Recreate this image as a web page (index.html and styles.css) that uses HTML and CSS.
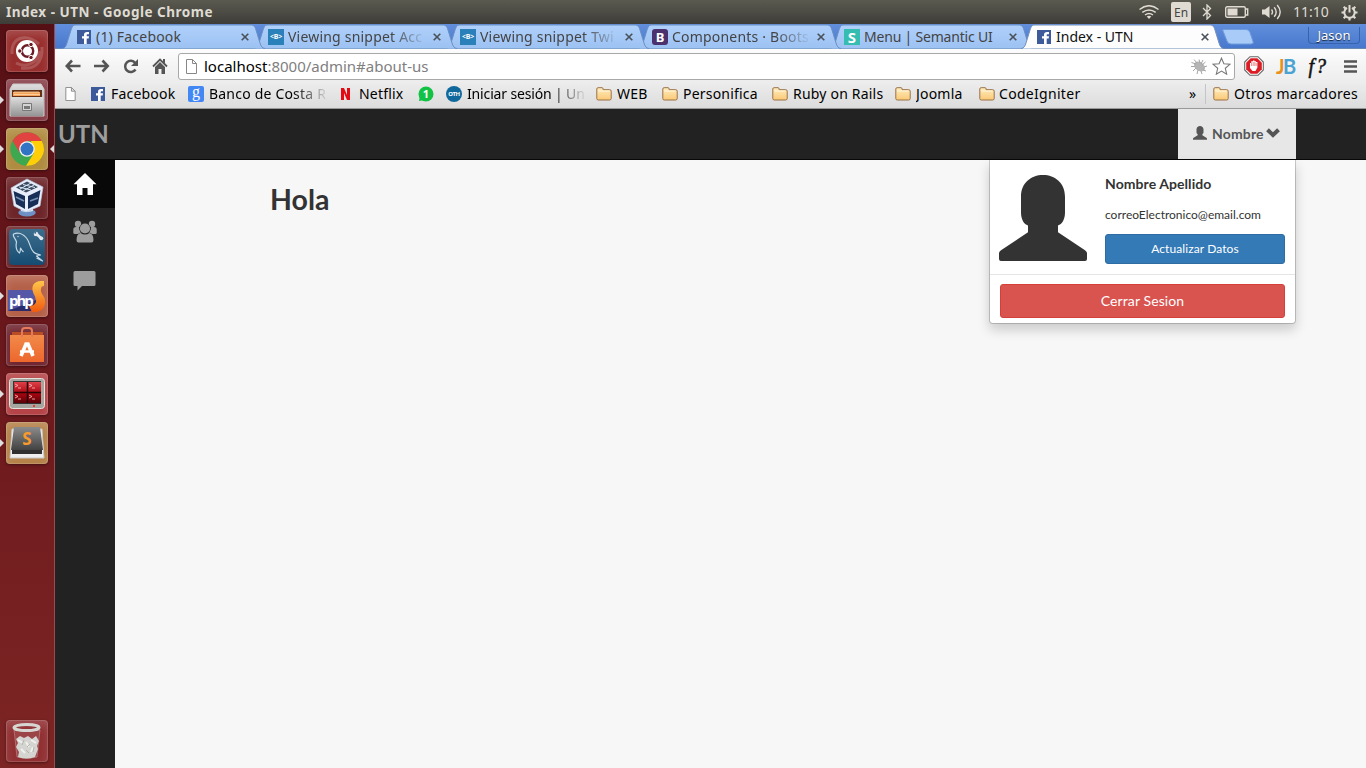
FILE: index.html
```html
<!DOCTYPE html>
<html lang="es">
<head>
<meta charset="utf-8">
<title>Index - UTN</title>
<link rel="stylesheet" href="styles.css">
</head>
<body>
<svg class="defs" width="0" height="0">
  <defs>
    <linearGradient id="tabfill" x1="0" y1="0" x2="0" y2="1"><stop offset="0" stop-color="#b0d0fa"/><stop offset="1" stop-color="#9cc2f3"/></linearGradient>
    <linearGradient id="folderfill" x1="0" y1="0" x2="0" y2="1"><stop offset="0" stop-color="#ffedc0"/><stop offset="1" stop-color="#fbc975"/></linearGradient>
    <linearGradient id="metal" x1="0" y1="0" x2="0" y2="1"><stop offset="0" stop-color="#dedede"/><stop offset="1" stop-color="#949494"/></linearGradient>
    <linearGradient id="orange" x1="0" y1="0" x2="0" y2="1"><stop offset="0" stop-color="#ffc54a"/><stop offset="1" stop-color="#f15a0e"/></linearGradient>
    <linearGradient id="sea" x1="0" y1="0" x2="0" y2="1"><stop offset="0" stop-color="#3d6d8d"/><stop offset="1" stop-color="#164c72"/></linearGradient>
    <linearGradient id="bag" x1="0" y1="0" x2="0" y2="1"><stop offset="0" stop-color="#f18a4a"/><stop offset="1" stop-color="#ed672c"/></linearGradient>
    <linearGradient id="dark" x1="0" y1="0" x2="0" y2="1"><stop offset="0" stop-color="#8b8b8b"/><stop offset="1" stop-color="#424242"/></linearGradient>
    <linearGradient id="redscreen" x1="0" y1="0" x2="0" y2="1"><stop offset="0" stop-color="#e04048"/><stop offset=".55" stop-color="#a80610"/><stop offset="1" stop-color="#5a0208"/></linearGradient>
  </defs>
  <symbol id="tab" viewBox="0 0 203 25"><path d="M0 24.500C3 24.500 4 22 5 19L9 6C10.500 2 11 1 14 1H188C192 1 193 2.500 194 6L198 19C199 22 200 24.500 203 24.500"/></symbol>
  <symbol id="fb" viewBox="0 0 14 14"><path fill="#3d5a9a" d="M0 0h14v14H0z"/><path fill="#fff" d="M7 14V8.500H5V6.200h2V4.800C7 2.800 8.200 2 10 2h2v2.200h-1.300c-.8 0-1 .3-1 .9v1.100H12l-.3 2.300h-2V14z"/></symbol>
  <symbol id="page" viewBox="0 0 11 15"><path fill="#fff" stroke="#888" d="M.5.5h6l4 4v10H.5zM6.500.5v4h4"/></symbol>
  <symbol id="folder" viewBox="0 0 16 14"><path fill="url(#folderfill)" stroke="#9a7048" d="M.8 11.500V2q0-1.300 1.300-1.300h4q1 0 1 1.300v.7h6.600q1.500 0 1.500 1.500v7.300q0 1.500-1.500 1.500H2.300Q.8 13 .8 11.500z"/><path fill="none" stroke="#fff6dc" d="M2 4h11.500"/></symbol>
  <symbol id="user" viewBox="0 0 88 88"><path d="M22 22C22 8 32 0 44 0s22 8 22 22v16c0 7-3 12-7 13v7l27 18q2 1.500 2 3v6q0 2-2 2H2q-2 0-2-2v-6q0-1.500 2-3l27-18v-7c-4-1-7-6-7-13z"/></symbol>
  <symbol id="x" viewBox="0 0 8 8"><path fill="none" stroke="#4a5058" stroke-width="1.600" d="M.7.7l6.600 6.600M7.300.7L.7 7.300"/></symbol>
</svg>

<header class="panel">
  <strong class="panel-title">Index - UTN - Google Chrome</strong>
  <div class="tray">
    <svg class="wifi" width="20" height="14" viewBox="0 0 20 14"><g fill="none" stroke="#dfdbd2" stroke-width="1.500"><path d="M.5 4.500Q10-3 19.500 4.500"/><path d="M3.300 7.400q6.700-5 13.400 0M6 10q4-3 8 0"/></g><path fill="#dfdbd2" d="M7.700 11.600q2.300-1.500 4.600 0L10 14z"/></svg>
    <span class="lang">En</span>
    <svg class="bt" width="10" height="16" viewBox="0 0 10 16"><path fill="none" stroke="#dfdbd2" stroke-width="1.300" d="M1 4l7.500 7.500L5 15V1l3.500 3.500L1 12"/></svg>
    <svg class="battery" width="24" height="12" viewBox="0 0 24 12"><rect x=".7" y=".7" width="19.600" height="10.600" rx="1.500" fill="none" stroke="#dfdbd2" stroke-width="1.400"/><path fill="#dfdbd2" d="M2.500 2.500h10v7h-10z"/><path fill="none" stroke="#dfdbd2" stroke-width="1.400" d="M21 3h1.700v6H21"/></svg>
    <svg class="volume" width="21" height="16" viewBox="0 0 21 16"><path fill="#dfdbd2" d="M1 5.500h3L8.500 2v12L4 10.500H1z"/><g fill="none" stroke="#dfdbd2" stroke-width="1.400"><path d="M10.500 5.500q2 2.500 0 5M13.200 3.200q4 4.800 0 9.600M16.200 1q6 7 0 14"/></g></svg>
    <span class="clock">11:10</span>
    <svg width="17" height="17" viewBox="0 0 17 17"><g stroke="#dfdbd2" fill="none"><path stroke-width="2" d="M11 3.900a5.200 5.200 0 1 1-5 0M8.500 1v7.500"/><path stroke-width="2.200" d="M.5 8.500h3M13.500 8.500h3M8.500 13.500v3M2.700 2.700l2 2M14.300 2.700l-2 2M2.700 14.300l2-2M14.300 14.300l-2-2"/></g></svg>
  </div>
</header>

<div class="desktop">
<nav class="launcher">
  <div class="tile ubuntu"><svg viewBox="0 0 42 42"><g fill="none" stroke="#fff" stroke-opacity=".18" stroke-width="3"><path d="M6 24C5 7 20 3 33 14M36 17c1 15-7 23-21 21M10 33C22 39 33 31 34 21"/></g><circle cx="21" cy="21" r="11" fill="#fff"/><circle cx="21.500" cy="21" r="5.700" fill="none" stroke="#6d1b24" stroke-width="2.400"/><g fill="#6d1b24" stroke="#fff"><circle cx="13.800" cy="21" r="2.200"/><circle cx="25" cy="14.500" r="2.200"/><circle cx="25" cy="27.500" r="2.200"/></g></svg></div>
  <div class="tile files run"><svg viewBox="0 0 42 42"><path fill="url(#metal)" stroke="#ccc" d="M7 5h28l3 5v27H4V10z"/><path fill="#653116" d="M6 11h30v7H6z"/><path fill="#f3a25a" d="M7 13h27v4H7z"/><path stroke="#ffe1b7" stroke-width=".7" d="M8 13h25M8 15.500h26"/><path fill="url(#metal)" d="M5 18h32v19H5z"/><path fill="#d4d4d4" stroke="#777" d="M16.500 24.500h9v7h-9z"/><path fill="#777" d="M18 27h6v3h-6z"/></svg></div>
  <div class="tile chrome run active"><svg viewBox="0 0 42 42"><circle cx="21" cy="21" r="16.700" fill="#3da850"/><path fill="#e04340" d="M6.500 13A16.700 16.700 0 0 1 35.800 13H21L14 25z"/><path fill="#ffce08" d="M35.800 13A16.700 16.700 0 0 1 20 37.700L28 25l-3-12z"/><circle cx="21" cy="21" r="7.800" fill="#f4f4f4"/><circle cx="21" cy="21" r="6.500" fill="#3274c4"/></svg></div>
  <div class="tile vbox"><svg viewBox="0 0 42 42"><path fill="#6d91c4" d="M15 31h12v2q5 2 1 5-7 3-14 0-4-3 1-5z"/><path fill="#d6e2f2" d="M15 32h12v2q-6 2-12 0z"/><path fill="#e7eef9" stroke="#b8cbe4" stroke-width=".7" d="M5 11L21 2l16 8-3 19-14 6-12-6z"/><path fill="#172f56" d="M7.500 14L19 19v13L10 27zM22 19l12.500-6L32 27l-10 5z"/><path fill="#3c4a60" d="M10 10.500L21 4.500l11 5.500-12 5.500z"/><g stroke="#dbe8fa" stroke-width="1"><path d="M13 10l12 3M17 7.500l12 3M14 12l11-6M17 14l11-6"/></g><g stroke="#7791b5" stroke-width="1.700"><path d="M10 20l8 4M24 24l8-3"/></g></svg></div>
  <div class="tile mysql"><svg viewBox="0 0 42 42"><rect x="3" y="3" width="36" height="36" rx="4" fill="url(#sea)"/><path fill="none" stroke="#c6d9e4" stroke-width="1.200" stroke-linejoin="round" d="M7.500 8c5-2 10 0 13 4 4 5 3 10 7 14 2 2 4 2 7 3l-4 1 6 5-6-3M7.500 8c-1 3 2 4 3 8-1 5 0 9 3 11 1-2 1-3 1-5 1 2 2 3 3 4"/><circle cx="12" cy="10.500" r=".7" fill="#c6d9e4"/><path stroke="#e0e8ee" stroke-width="2.600" d="M31 8.500l4.500 4"/><circle cx="30" cy="8" r="2.300" fill="#e0e8ee"/><circle cx="35.300" cy="12.300" r="1.900" fill="#e0e8ee"/><circle cx="29.200" cy="6.800" r="1" fill="#37678a"/></svg></div>
  <div class="tile phpstorm run"><svg viewBox="0 0 42 42"><path fill="#5557a7" d="M2 15h27v21H2z"/><path fill="#292b6b" d="M2 36l28-11v11z"/><path fill="url(#orange)" d="M38 6h-3c-7 0-10 5-8 11 1 4 4 6 3 10-1 3-4 4-7 4l3 6h3c7 0 11-5 10-12-1-5-5-7-4-11 0-2 1-3 3-3z"/><text x="3" y="31" class="php">php</text></svg></div>
  <div class="tile software"><svg viewBox="0 0 42 42"><path fill="#b94e25" d="M6 8h31v5H6z"/><path fill="url(#bag)" d="M4 11h34v27H4z"/><path fill="none" stroke="#e77a58" stroke-width="2" d="M16 13V7q0-3 3-3h4q3 0 3 3v6"/><path fill="none" stroke="#fff" stroke-width="3.600" d="M15 32l5-12h2l5 12"/><path stroke="#fff" stroke-width="2.500" d="M14 27.500h14"/></svg></div>
  <div class="tile terminator run"><svg viewBox="0 0 42 42"><rect x="3.500" y="5.500" width="35" height="30" rx="3" fill="#a6a6a0" stroke="#e3e3de"/><path fill="#333" d="M7 8h28v23H7z"/><path fill="url(#redscreen)" d="M8 9h27v21H8z"/><path stroke="#280205" stroke-width="1.500" d="M21.500 9v21M8 19.500h27"/><path fill="none" stroke="#ffc2c2" stroke-width=".8" d="M9 11l3 1.500L9 14M12 15h3M23 11l3 1.500-3 1.500M26 15h3M9 22l3 1.500L9 25M12 26h3M23 22l3 1.500-3 1.500M26 26h3"/><circle cx="28" cy="33" r="1" fill="#e21"/></svg></div>
  <div class="tile sublime run"><svg viewBox="0 0 42 42"><path fill="#eee" stroke="#c9c9c9" d="M6 7h30l2 29H4z"/><path fill="#303030" d="M6 27h30v5H6z"/><path fill="url(#dark)" d="M8 5h26l3 23H5z"/><text x="21" y="23" text-anchor="middle" class="sub">S</text></svg></div>
  <div class="tile trash"><svg viewBox="0 0 42 42"><path fill="#fff" fill-opacity=".1" stroke="#d6bcbc" stroke-opacity=".4" d="M8 10l3 27q10 3 20 0l3-27z"/><path fill="#d4d5d1" d="M10 19l4-3 4 2 4-2 4 3 4-3 3 5-2 5 1 3-3 8q-9 3-17 0l1-5-3-5 2-4z"/><g stroke="#f0f0ec" stroke-width="2"><path d="M12 20l5 3M25 20l5 3M15 29l4 4M27 27l-2 5M20 22l3 5"/></g><g stroke="#b3b4af"><path d="M18 20l-2 5M24 24l-3 3M20 30l3 3M28 27l-1 5"/></g><ellipse cx="20.500" cy="7.500" rx="12.500" ry="3" fill="none" stroke="#d7d7d2" stroke-width="3"/></svg></div>
</nav>

<main class="browser">
  <div class="tabs">
    <div class="tab t1"><svg class="shape"><use href="#tab"/></svg><span class="fav"><svg width="14" height="14"><use href="#fb"/></svg></span><span class="label wide">(1) Facebook</span><svg class="close"><use href="#x"/></svg></div>
    <div class="tab t2"><svg class="shape"><use href="#tab"/></svg><span class="fav snippet">&lt;B&gt;</span><span class="label fade wide">Viewing snippet Acc</span><svg class="close"><use href="#x"/></svg></div>
    <div class="tab t3"><svg class="shape"><use href="#tab"/></svg><span class="fav snippet">&lt;B&gt;</span><span class="label fade wide">Viewing snippet Twi</span><svg class="close"><use href="#x"/></svg></div>
    <div class="tab t4"><svg class="shape"><use href="#tab"/></svg><span class="fav boots">B</span><span class="label fade wide">Components · Boots</span><svg class="close"><use href="#x"/></svg></div>
    <div class="tab t5"><svg class="shape"><use href="#tab"/></svg><span class="fav semantic">S</span><span class="label menu-label">Menu | Semantic UI</span><svg class="close"><use href="#x"/></svg></div>
    <div class="tab t6 selected"><svg class="shape"><use href="#tab"/></svg><span class="fav"><svg width="14" height="14"><use href="#fb"/></svg></span><span class="label">Index - UTN</span><svg class="close"><use href="#x"/></svg></div>
    <svg class="newtab" width="32" height="16" viewBox="0 0 32 16"><path fill="#a9cbf8" stroke="#6f9bdc" d="M1 2Q0 .5 2 .5h22q3 0 4 3l3 9q1 2.500-2 2.500H9q-3 0-4-3z"/></svg>
    <span class="profile">Jason</span>
  </div>

  <div class="toolbar">
    <svg width="16" height="14" viewBox="0 0 16 14"><path fill="none" stroke="#555" stroke-width="2.600" d="M7 1.500L1.800 7 7 12.500M2 7h13.500"/></svg>
    <svg width="16" height="14" viewBox="0 0 16 14"><path fill="none" stroke="#555" stroke-width="2.600" d="M8.500 1.500L13.700 7l-5.200 5.500M13.500 7H0"/></svg>
    <svg width="16" height="15" viewBox="0 0 16 15"><path fill="none" stroke="#555" stroke-width="2.500" d="M12.500 10.500a5.600 5.600 0 1 1-.3-6.500"/><path fill="#555" d="M15 0v7H8z"/></svg>
    <svg width="16" height="16" viewBox="0 0 16 16"><path fill="none" stroke="#555" stroke-width="1.800" d="M1 8.500l7-7 7 7"/><path fill="#555" d="M11 1h2v5l-2-2zM8 4l5 5v7H9.500v-5h-3v5H3V9z"/></svg>
    <div class="omnibox">
      <svg width="11" height="15"><use href="#page"/></svg>
      <span class="url"><b>localhost</b>:8000/admin#about-us</span>
      <svg class="bug" width="16" height="15" viewBox="0 0 16 15"><ellipse cx="8.500" cy="7.500" rx="6" ry="4.300" transform="rotate(35 8.500 7.500)" fill="#b5b5b5"/><path fill="none" stroke="#a5a5a5" d="M.5 3.500L5 5M3 .5L6 4M8 .5L9 4M0 7.500h4M2 12l3-3M6 15l1-4M11 15l-1-3M15 12l-3-1M16 7l-3 1M14.500 3L11 6M12 1l-2 4"/></svg>
      <svg width="19" height="18" viewBox="0 0 19 18"><path fill="#fff" stroke="#777" stroke-width="1.100" d="M9.500 1.200l2.400 5.600 6 .5-4.600 4 1.400 5.900-5.200-3.100-5.200 3.100 1.400-5.900-4.600-4 6-.5z"/></svg>
    </div>
    <svg class="abp" width="20" height="20" viewBox="0 0 20 20"><path fill="#fff" stroke="#666" stroke-width="1.100" d="M6 .7h8L19.300 6v8L14 19.300H6L.7 14V6z"/><path fill="#db1e25" d="M6.700 2.200h6.600l4.500 4.500v6.600l-4.500 4.500H6.700l-4.500-4.500V6.700z"/><path fill="#fff" d="M6 7h1.300V5.300H9V4.500h1.500v.8H12V6h1.400v5.500L11.500 15h-3L6 12z"/><path stroke="#db1e25" stroke-width=".5" d="M7.600 7v3M9.200 6v4M10.800 6v4M12.200 7v3"/></svg>
    <span class="jb"><i>J</i>B</span>
    <span class="fq"><i>f</i>?</span>
    <svg width="13" height="13" viewBox="0 0 13 13"><path stroke="#555" stroke-width="2.700" d="M0 1.500h13M0 6.500h13M0 11.500h13"/></svg>
  </div>

  <div class="bookmarks">
    <svg class="mi" width="11" height="14"><use href="#page"/></svg>
    <a class="bm b1"><svg width="14" height="14"><use href="#fb"/></svg><span>Facebook</span></a>
    <a class="bm b2"><em class="google">g</em><span class="fade">Banco de Costa R</span></a>
    <a class="bm b3"><svg width="11" height="14" viewBox="0 0 11 14"><path fill="#e50914" d="M1 1h3l3 7V1h3v12H7L4 6v7H1z"/></svg><span>Netflix</span></a>
    <a class="bm b4"><svg width="16" height="16" viewBox="0 0 16 16"><circle cx="8" cy="8" r="7.500" fill="#12c244"/><path fill="#12c244" d="M1 15l1-6 5 5z"/><text x="8" y="12" text-anchor="middle" class="one">1</text></svg></a>
    <a class="bm b5"><em class="oth">OTH</em><span class="fade">Iniciar sesión | Un</span></a>
    <a class="bm b6"><svg width="16" height="14"><use href="#folder"/></svg><span>WEB</span></a>
    <a class="bm b7"><svg width="16" height="14"><use href="#folder"/></svg><span>Personifica</span></a>
    <a class="bm b8"><svg width="16" height="14"><use href="#folder"/></svg><span>Ruby on Rails</span></a>
    <a class="bm b9"><svg width="16" height="14"><use href="#folder"/></svg><span>Joomla</span></a>
    <a class="bm b10"><svg width="16" height="14"><use href="#folder"/></svg><span>CodeIgniter</span></a>
    <span class="more">»</span>
    <a class="bm b11"><svg width="16" height="14"><use href="#folder"/></svg><span>Otros marcadores</span></a>
  </div>

  <div class="site">
    <div class="navbar">
      <a class="brand">UTN</a>
      <div class="account">
        <a class="toggle"><svg width="14" height="14"><use href="#user"/></svg><strong>Nombre</strong><svg width="14" height="10" viewBox="0 0 14 10"><path fill="none" stroke="#555" stroke-width="4" d="M1.500 1.800L7 7l5.500-5.200"/></svg></a>
        <div class="menu">
          <div class="who">
            <svg width="88" height="87" viewBox="0 0 88 88" preserveAspectRatio="none"><use href="#user" width="88" height="88"/></svg>
            <div class="info">
              <strong>Nombre Apellido</strong>
              <small>correoElectronico@email.com</small>
              <a class="btn primary">Actualizar Datos</a>
            </div>
          </div>
          <div class="out"><a class="btn danger">Cerrar Sesion</a></div>
        </div>
      </div>
    </div>
    <div class="body">
      <nav class="side">
        <a class="on"><svg width="24" height="24" viewBox="0 0 24 24"><path d="M12 1l11.500 11.300H20V23h-5.500v-7h-5v7H4V12.300H.5z"/></svg></a>
        <a><svg width="24" height="24" viewBox="0 0 24 24"><circle cx="5" cy="4" r="3.200"/><circle cx="19" cy="4" r="3.200"/><path d="M.3 13V9.500Q.3 7 3 7h3q.5 5 3 6l-4 1H2q-1.700 0-1.700-1zM23.700 13V9.500Q23.700 7 21 7h-3q-.5 5-3 6l4 1h3q1.700 0 1.700-1z"/><g class="front"><circle cx="12" cy="8.500" r="5.100"/><path d="M3.500 20q0-6 4-7 4.500 3 9 0 4 1 4 7 0 2.500-2 2.500h-13q-2 0-2-2.500z"/></g></svg></a>
        <a><svg width="24" height="24" viewBox="0 0 24 24"><path d="M2 3h19q1.500 0 1.500 1.500v12Q22.500 18 21 18H9l-4.500 4.500V18H2Q.5 18 .5 16.500v-12Q.5 3 2 3z"/></svg></a>
      </nav>
      <section class="content"><h2>Hola</h2></section>
    </div>
  </div>
</main>
</div>
</body>
</html>
```
FILE: styles.css
```css
* { box-sizing: border-box; }
body { margin: 0; width: 1366px; height: 768px; overflow: hidden; font-family: "Noto Sans", "Open Sans", sans-serif; font-size: 14px; }
svg { flex: none; display: block; }
.defs { position: absolute; }

/* desktop panel */
.panel { height: 24px; display: flex; align-items: center; justify-content: space-between; padding: 0 8px 0 6px; color: #dfdbd2; background: linear-gradient(#5b5a50, #3d3c38); }
.panel-title { font-size: 13.500px; letter-spacing: .5px; line-height: 24px; white-space: nowrap; }
.tray { display: flex; align-items: center; }
.wifi { margin-right: 12px; }
.lang { width: 20px; height: 20px; border-radius: 2px; background: #dfdbd2; color: #45443f; font-size: 12px; line-height: 21px; text-align: center; margin-right: 11px; }
.bt { margin-right: 13px; }
.battery { margin-right: 12px; }
.volume { margin-right: 11px; }
.clock { width: 37px; margin-right: 11px; font-size: 14px; line-height: 24px; white-space: nowrap; }

.desktop { display: flex; height: 744px; }

/* launcher */
.launcher { flex: none; width: 55px; padding: 6px 0 6px 6px; display: flex; flex-direction: column; gap: 7px; background: linear-gradient(#551015, #68161b 35%, #7d2524); border-right: 1px solid #9a4b4b; }
.tile { position: relative; width: 42px; height: 42px; border-radius: 4px; box-shadow: inset 0 0 0 1px rgba(255,255,255,.14), inset 0 5px 8px rgba(255,255,255,.16), 0 1px 3px rgba(0,0,0,.4); background: #6d2529; }
.tile svg { width: 42px; height: 42px; }
.ubuntu { background: #982e2d; }
.files { background: #873e47; }
.chrome { background: #b08c40; }
.phpstorm { background: #b5614a; }
.software { background: #702731; }
.terminator { background: #b54347; }
.sublime { background: #b58249; }
.trash { margin-top: auto; background: #913033; }
.run::before { content: ""; position: absolute; left: -6px; top: 17px; border: 4px solid transparent; border-left-color: #dedede; border-right: 0; }
.active::after { content: ""; position: absolute; right: -6px; top: 17px; border: 4px solid transparent; border-right-color: #dedede; border-left: 0; }
.php { font: bold 15px "Open Sans", sans-serif; letter-spacing: -2px; fill: #fff; }
.sub { font: bold 17px "Open Sans", sans-serif; fill: #f99a2e; }

/* browser */
.browser { flex: 1; min-width: 0; display: flex; flex-direction: column; }
.tabs { height: 25px; flex: none; display: flex; background: linear-gradient(#628fdc, #4878cd); border-bottom: 1px solid #6989b3; padding-left: 7px; }
.tab { position: relative; flex: none; width: 192px; height: 25px; display: flex; align-items: center; padding-left: 14px; color: #444; }
.t1 { z-index: 6; } .t2 { z-index: 5; } .t3 { z-index: 4; } .t4 { z-index: 3; } .t5 { z-index: 2; } .t6 { z-index: 7; }
.shape { position: absolute; left: 0; top: 0; width: 203px; height: 25px; fill: url(#tabfill); stroke: #6b8fc4; }
.selected .shape { fill: #fdfdfd; stroke: #7590bd; }
.selected { color: #111; margin-left: -1px; padding-left: 15px; }
.fav { position: relative; width: 16px; height: 16px; margin-right: 4px; color: #fff; font-weight: bold; text-align: center; flex: none; }
.fav svg { margin: 1px; }
.snippet { background: #2a80b9; font-size: 7px; line-height: 16px; letter-spacing: -.3px; }
.boots { background: #4b316d; border-radius: 3px; font-size: 13px; line-height: 16px; }
.semantic { background: #35bdb2; font-size: 15px; line-height: 16px; }
.label { position: relative; width: 139px; overflow: hidden; white-space: nowrap; line-height: 20px; }
.wide { letter-spacing: .2px; }
.menu-label { letter-spacing: -.2px; }
.fade { -webkit-mask-image: linear-gradient(to left, transparent, #000 36px); mask-image: linear-gradient(to left, transparent, #000 36px); }
.close { position: relative; width: 8px; height: 8px; margin-left: 6px; }
.newtab { margin: 5px 0 0 9px; }
.profile { margin: 3px 6px 0 auto; width: 52px; height: 17px; border: 1px solid #3862ac; border-top: 0; border-radius: 0 0 4px 4px; color: #fff; font-size: 13px; line-height: 16px; text-align: center; text-shadow: 0 1px 1px #123; }
.toolbar { flex: none; height: 34px; display: flex; align-items: center; gap: 13px; padding: 0 9px 0 10px; background: linear-gradient(#fcfcfc, #ececec); }
.omnibox { width: 1057px; height: 27px; margin-left: -3px; border: 1px solid #a8a8a8; border-radius: 3px; background: #fff; display: flex; align-items: center; padding: 0 3px 0 7px; flex: none; }
.url { flex: 1; margin-left: 7px; font-size: 15px; line-height: 24px; color: #808080; white-space: nowrap; }
.url b { font-weight: normal; color: #000; }
.bug { margin-right: 5px; }
.abp { margin-left: -4px; }
.jb { width: 20px; font: bold 20px Lato, sans-serif; letter-spacing: -1.500px; color: #4aa3d0; margin-left: -1px; }
.jb i { font-style: normal; color: #e8921d; }
.fq { width: 20px; font: italic 20px "Liberation Serif", serif; letter-spacing: 2px; -webkit-text-stroke: .5px #111; color: #111; white-space: nowrap; }
.toolbar > svg:last-child { margin-left: 3px; }
.bookmarks { flex: none; height: 26px; display: flex; align-items: center; padding: 0 0 4px 10px; background: linear-gradient(#ececec, #dcdcdc); border-bottom: 1px solid #999; color: #000; }
.mi { margin-right: 15px; }
.bm { display: flex; align-items: center; gap: 6px; white-space: nowrap; flex: none; }
.bm span { overflow: hidden; flex: 1; line-height: 20px; letter-spacing: .2px; }
.b1 { width: 97px; } .b2 { width: 152px; gap: 5px; } .b3 { width: 78px; gap: 8px; } .b4 { width: 28px; }
.b5 { width: 150px; gap: 5px; } .b6 { width: 66px; gap: 5px; } .b7 { width: 110px; gap: 5px; } .b8 { width: 123px; gap: 5px; } .b9 { width: 84px; gap: 5px; } .b10 { width: 210px; gap: 4px; } .b11 { gap: 5px; width: 147px; }
.bm .fade { flex: none; width: 120px; }
.b11 span { letter-spacing: .35px; }
.b10 span { letter-spacing: .3px; }
.b5 .fade { letter-spacing: -.15px; }
.bm em { font-style: normal; color: #fff; text-align: center; }
.google { width: 16px; height: 16px; background: #4387f5; border-radius: 2px; font: 16px/12px "Liberation Serif", serif; }
.one { font: bold 11px "Open Sans", sans-serif; fill: #fff; }
.oth { width: 16px; height: 16px; border-radius: 50%; background: #10699d; font-size: 6px; font-weight: bold; line-height: 16px; letter-spacing: -.3px; }
.more { width: 17px; border-right: 1px solid #c4c4c4; margin-right: 7px; line-height: 20px; }

/* site */
.site { flex: 1; display: flex; flex-direction: column; background: #f7f7f7; font-family: Lato, sans-serif; color: #333; }
.navbar { height: 51px; flex: none; display: flex; justify-content: space-between; padding: 0 70px 0 3px; background: #222; border-bottom: 1px solid #080808; }
.brand { color: #9d9d9d; font-size: 24px; font-weight: 700; line-height: 50px; }
.account { position: relative; width: 118px; }
.toggle { height: 50px; display: flex; align-items: center; padding: 0 14px 2px 15px; background: #e7e7e7; color: #555; fill: #555; }
.toggle strong { margin: 0 2px 0 5px; letter-spacing: .15px; }
.menu { position: absolute; top: 51px; right: 0; width: 307px; height: 164px; background: #fff; border: 1px solid rgba(0,0,0,.18); border-top: 0; border-radius: 0 0 4px 4px; box-shadow: 0 6px 12px rgba(0,0,0,.175); background-clip: padding-box; }
.who { display: flex; height: 115px; padding: 15px 10px 0 9px; border-bottom: 1px solid #e5e5e5; fill: #333; }
.info { margin-left: 18px; width: 180px; display: flex; flex-direction: column; }
.info strong { line-height: 18px; letter-spacing: .07px; }
.info small { font-size: 12px; line-height: 18px; margin: 13px 0 10px; }
.btn { display: block; border-radius: 3px; border: 1px solid; color: #fff; text-align: center; }
.primary { height: 30px; line-height: 28px; font-size: 12px; letter-spacing: .1px; background: #337ab7; border-color: #2e6da4; }
.out { padding: 9px 10px 0; }
.danger { height: 34px; line-height: 32px; font-size: 14px; letter-spacing: .1px; background: #d9534f; border-color: #d43f3a; }
.body { display: flex; flex: 1; }
.side { width: 60px; background: #222; fill: #9d9d9d; }
.side a { height: 48px; display: flex; align-items: center; justify-content: center; padding: 0 1px 1px 0; }
.side .on { background: #080808; fill: #fff; }
.front { stroke: #222; stroke-width: 1px; paint-order: stroke; }
.content { padding: 21px 155px; }
h2 { margin: 0; font-size: 28.500px; line-height: 36px; font-weight: 700; }
```
